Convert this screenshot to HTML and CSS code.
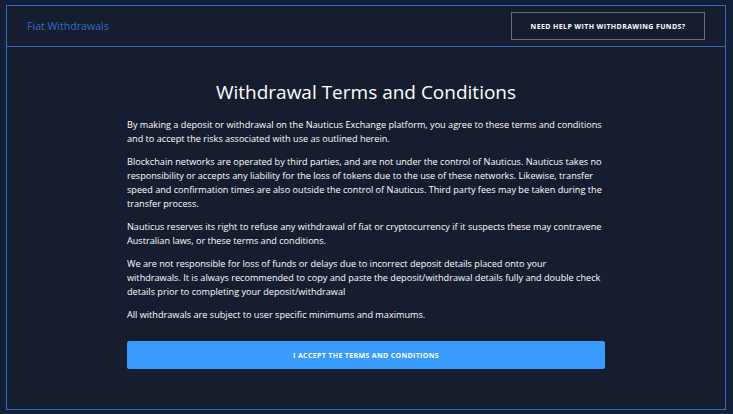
FILE: index.html
```html
<!DOCTYPE html>
<html lang="en">
<head>
<meta charset="utf-8">
<title>Fiat Withdrawals</title>
<link rel="stylesheet" href="styles.css">
</head>
<body>
<div class="panel">
  <header class="panel-head">
    <span class="panel-title">Fiat Withdrawals</span>
    <button class="help-btn">NEED HELP WITH WITHDRAWING FUNDS?</button>
  </header>
  <main class="panel-body">
    <h1 class="terms-title">Withdrawal Terms and Conditions</h1>
    <div class="terms">
      <p>By making a deposit or withdrawal on the Nauticus Exchange platform, you agree to these terms and conditions and to accept the risks associated with use as outlined herein.</p>
      <p>Blockchain networks are operated by third parties, and are not under the control of Nauticus. Nauticus takes no responsibility or accepts any liability for the loss of tokens due to the use of these networks. Likewise, transfer speed and confirmation times are also outside the control of Nauticus. Third party fees may be taken during the transfer process.</p>
      <p>Nauticus reserves its right to refuse any withdrawal of fiat or cryptocurrency if it suspects these may contravene Australian laws, or these terms and conditions.</p>
      <p>We are not responsible for loss of funds or delays due to incorrect deposit details placed onto your<br>withdrawals. It is always recommended to copy and paste the deposit/withdrawal details fully and double check details prior to completing your deposit/withdrawal</p>
      <p>All withdrawals are subject to user specific minimums and maximums.</p>
      <button class="accept-btn">I ACCEPT THE TERMS AND CONDITIONS</button>
    </div>
  </main>
</div>
</body>
</html>
```

FILE: styles.css
```css
* { box-sizing: border-box; }
html, body { height: 100%; }
body {
  margin: 0;
  padding: 5px 7px 4px 6px;
  background: #13203a;
  font-family: "Open Sans", "Noto Sans", sans-serif;
  color: #ffffff;
}
.panel {
  height: 100%;
  border: 1px solid #2d6fbc;
  background: #161d2f;
  display: flex;
  flex-direction: column;
}
.panel-head {
  height: 41px;
  border-bottom: 1px solid #2d6fbc;
  display: flex;
  align-items: center;
  justify-content: space-between;
  padding: 0 20px 0 20px;
}
.panel-title {
  font-size: 10.6px;
  color: #2f6ec2;
}
.help-btn {
  width: 194px;
  height: 28px;
  background: transparent;
  border: 1px solid #6b6e78;
  color: #ffffff;
  font-family: "Open Sans", "Noto Sans", sans-serif;
  font-weight: 700;
  font-size: 7px;
  letter-spacing: 0.38px;
  padding: 0;
}
.panel-body {
  flex: 1;
  display: flex;
  flex-direction: column;
  align-items: center;
  padding-top: 31px;
}
.terms-title {
  margin: 0;
  font-size: 19px;
  font-weight: 400;
  line-height: 28px;
}
.terms {
  width: 478px;
  margin-top: 11.5px;
  font-size: 9.15px;
  line-height: 14px;
}
.terms p {
  margin: 0 0 9px 0;
}
.accept-btn {
  display: block;
  width: 100%;
  height: 28px;
  margin-top: 19.5px;
  background: #3a9bff;
  border: none;
  border-radius: 2px;
  color: #ffffff;
  font-family: "Open Sans", "Noto Sans", sans-serif;
  font-weight: 700;
  font-size: 7px;
  letter-spacing: 0.35px;
  padding: 0;
}
```
